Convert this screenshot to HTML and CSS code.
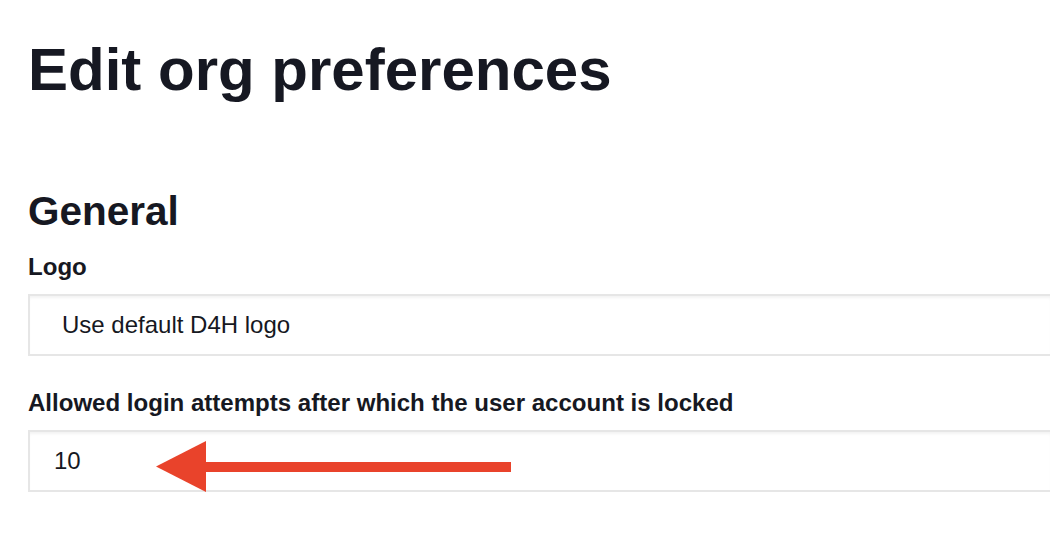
FILE: index.html
```html
<!DOCTYPE html>
<html lang="en">
<head>
<meta charset="utf-8">
<title>Edit org preferences</title>
<link rel="stylesheet" href="styles.css">
</head>
<body>
<main class="page">
  <h1 class="page-title">Edit org preferences</h1>
  <section class="section">
    <h2 class="section-title">General</h2>
    <div class="field">
      <label class="field-label">Logo</label>
      <div class="field-box field-select">Use default D4H logo</div>
    </div>
    <div class="field field-attempts">
      <label class="field-label">Allowed login attempts after which the user account is locked</label>
      <div class="field-box field-input">10
        <svg class="callout-arrow" width="355" height="51" viewBox="0 0 355 51" aria-hidden="true">
          <polygon points="0,25.5 50,0 50,51" fill="#e9432b"/>
          <rect x="49" y="21" width="306" height="10" fill="#e9432b"/>
        </svg>
      </div>
    </div>
  </section>
</main>
</body>
</html>
```

FILE: styles.css
```css
html, body {
  margin: 0;
  padding: 0;
  background: #ffffff;
  overflow: hidden;
}

body {
  font-family: "Liberation Sans", Arial, Helvetica, sans-serif;
  color: #161822;
}

.page {
  padding-left: 28px;
}

.page-title {
  margin: 35px 0 0;
  font-size: 60px;
  line-height: 70px;
  font-weight: 700;
  letter-spacing: 0;
}

.section {
  margin-top: 82px;
}

.section-title {
  margin: 0;
  font-size: 40.5px;
  line-height: 48px;
  font-weight: 700;
}

.field {
  margin-top: 18px;
  display: flex;
  flex-direction: column;
  gap: 13px;
}

.field-attempts {
  margin-top: 33px;
}

.field-label {
  display: block;
  font-size: 24.05px;
  line-height: 28px;
  font-weight: 700;
}

.field-box {
  position: relative;
  box-sizing: border-box;
  width: 100%;
  height: 62px;
  display: flex;
  align-items: center;
  border: 2px solid #e6e6e6;
  border-right: 0;
  box-shadow: inset 0 3px 3px -1px rgba(0, 0, 0, 0.05);
  background: #ffffff;
  font-size: 24px;
  font-weight: 400;
  color: #161822;
}

.field-select {
  padding-left: 32px;
}

.field-input {
  padding-left: 24px;
}

.callout-arrow {
  position: absolute;
  left: 126px;
  top: 9px;
}
```
